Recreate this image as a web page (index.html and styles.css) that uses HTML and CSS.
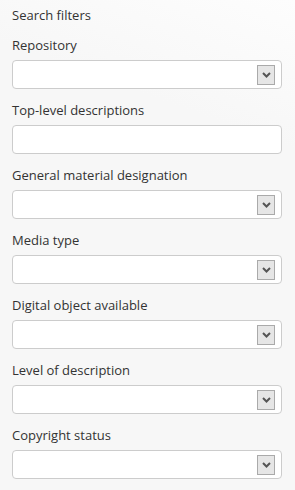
FILE: index.html
```html
<!DOCTYPE html>
<html lang="en">
<head>
  <meta charset="UTF-8" />
  <meta name="viewport" content="width=device-width, initial-scale=1.0"/>
  <title>Search filters</title>
  <link rel="stylesheet" href="styles.css">
</head>
<body>
  <div id="filters">
    <h4 class="filters-title">Search filters</h4>

    <div class="form-group">
      <label>Repository</label>
      <div class="select-box"><span class="select-arrow"><svg width="9" height="6" viewBox="0 0 9 6"><path d="M1 1 L4.5 4.5 L8 1" fill="none" stroke="#555" stroke-width="2"/></svg></span></div>
    </div>

    <div class="form-group">
      <label>Top-level descriptions</label>
      <div class="text-box"></div>
    </div>

    <div class="form-group">
      <label>General material designation</label>
      <div class="select-box"><span class="select-arrow"><svg width="9" height="6" viewBox="0 0 9 6"><path d="M1 1 L4.5 4.5 L8 1" fill="none" stroke="#555" stroke-width="2"/></svg></span></div>
    </div>

    <div class="form-group">
      <label>Media type</label>
      <div class="select-box"><span class="select-arrow"><svg width="9" height="6" viewBox="0 0 9 6"><path d="M1 1 L4.5 4.5 L8 1" fill="none" stroke="#555" stroke-width="2"/></svg></span></div>
    </div>

    <div class="form-group">
      <label>Digital object available</label>
      <div class="select-box"><span class="select-arrow"><svg width="9" height="6" viewBox="0 0 9 6"><path d="M1 1 L4.5 4.5 L8 1" fill="none" stroke="#555" stroke-width="2"/></svg></span></div>
    </div>

    <div class="form-group">
      <label>Level of description</label>
      <div class="select-box"><span class="select-arrow"><svg width="9" height="6" viewBox="0 0 9 6"><path d="M1 1 L4.5 4.5 L8 1" fill="none" stroke="#555" stroke-width="2"/></svg></span></div>
    </div>

    <div class="form-group">
      <label>Copyright status</label>
      <div class="select-box"><span class="select-arrow"><svg width="9" height="6" viewBox="0 0 9 6"><path d="M1 1 L4.5 4.5 L8 1" fill="none" stroke="#555" stroke-width="2"/></svg></span></div>
    </div>
  </div>
</body>
</html>
```

FILE: styles.css
```css
/* Page */
html, body {
  margin: 0;
  padding: 0;
  height: 100%;
}
body {
  background: linear-gradient(200deg, #fdfdfd 0%, #f7f7f7 25%, #f7f7f7 100%);
  color: #333;
  font-family: "Open Sans", "Liberation Sans", sans-serif;
  font-size: 13px;
}
#filters {
  padding: 5px 13px 0 12px;
}
.filters-title {
  margin: 0 0 10px;
  font-size: 13px;
  font-weight: normal;
  line-height: 20px;
}
/* Fields */
.form-group {
  margin-bottom: 11px;
}
.form-group label {
  display: block;
  line-height: 20px;
  margin-bottom: 5px;
}
.select-box,
.text-box {
  box-sizing: border-box;
  height: 29px;
  background: #fff;
  border: 1px solid #ccc;
  border-radius: 4px;
}
.select-box {
  display: flex;
  justify-content: flex-end;
  align-items: center;
  padding-right: 6px;
}
.select-arrow {
  box-sizing: border-box;
  width: 18px;
  height: 20px;
  background: #e6e6e6;
  border: 1px solid #aaa;
  display: flex;
  justify-content: center;
  align-items: center;
}
```
